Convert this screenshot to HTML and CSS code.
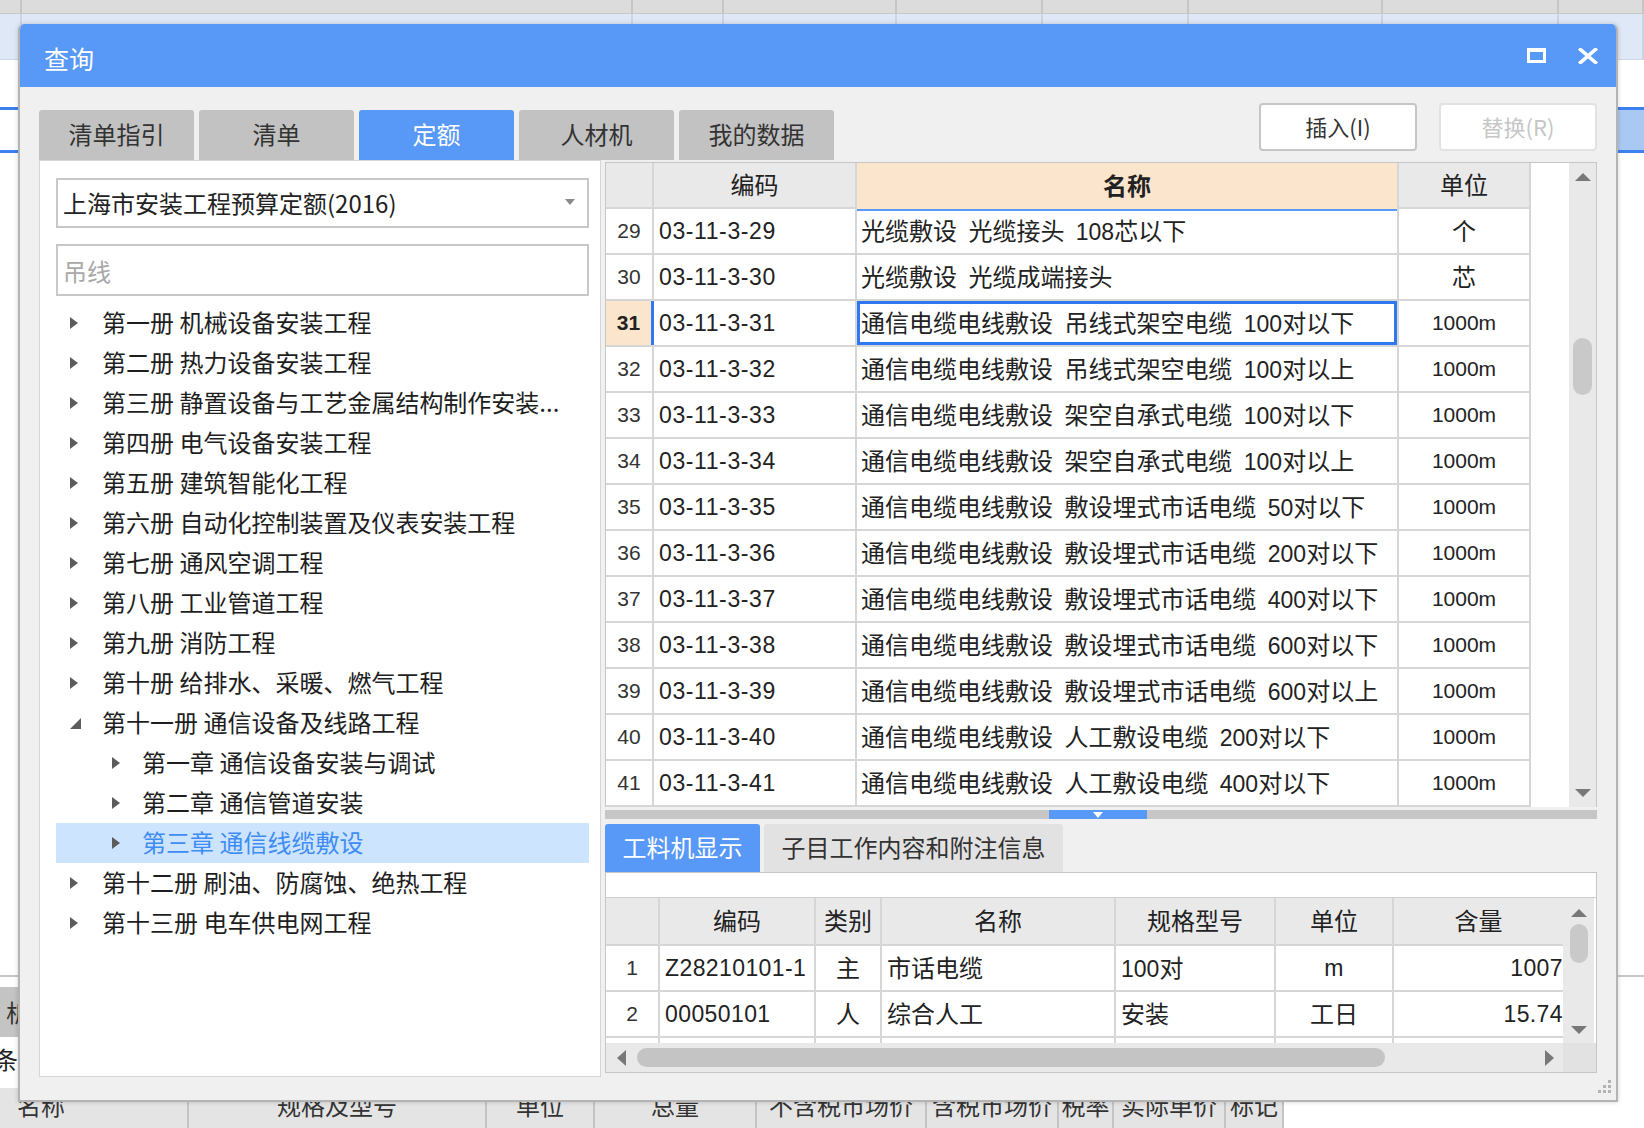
FILE: index.html
```html
<!DOCTYPE html>
<html lang="zh-CN">
<head>
<meta charset="utf-8">
<title>查询</title>
<link rel="stylesheet" href="styles.css">
</head>
<body>
<div class="app">
  <div class="app-head app-cols"><i></i><i></i><i></i><i></i><i></i><i></i><i></i><i></i><i></i></div>
  <div class="app-light app-cols"><i></i><i></i><i></i><i></i><i></i><i></i><i></i><i></i><i></i></div>
  <div class="app-blank"></div>
  <div class="app-sel"><div class="sel-l"></div><div class="sel-r"></div></div>
  <div class="app-spacer"></div>
  <div class="app-side">
    <div class="side-block">析</div>
    <div class="side-text">条件</div>
  </div>
  <div class="app-foot">
    <div class="fc fl">名称</div>
    <div class="fc">规格及型号</div>
    <div class="fc">单位</div>
    <div class="fc">总量</div>
    <div class="fc">不含税市场价</div>
    <div class="fc">含税市场价</div>
    <div class="fc">税率</div>
    <div class="fc">实际单价</div>
    <div class="fc">标记</div>
    <div class="fc blank"></div>
  </div>
</div>

<div class="dialog">
  <div class="titlebar">
    <span class="title">查询</span>
    <span class="ico-max"></span>
    <svg class="ico-close" width="20" height="16" viewBox="0 0 20 16"><path d="M2.5 1.5 L17.5 14.5 M17.5 1.5 L2.5 14.5" stroke="#fff" stroke-width="3.6" stroke-linecap="square"/></svg>
  </div>
  <div class="dbody">
    <div class="toolbar">
      <div class="tabs">
        <div class="tab">清单指引</div>
        <div class="tab">清单</div>
        <div class="tab on">定额</div>
        <div class="tab">人材机</div>
        <div class="tab">我的数据</div>
      </div>
      <div class="btns">
        <button class="btn">插入(I)</button>
        <button class="btn dis">替换(R)</button>
      </div>
    </div>
    <div class="main">
      <div class="left">
        <div class="select">
          <span>上海市安装工程预算定额(2016)</span>
          <svg width="10" height="6" viewBox="0 0 10 6"><path d="M0 0 H10 L5 6 Z" fill="#8a8a8a"/></svg>
        </div>
        <div class="search">吊线</div>
        <div class="tree">
          <div class="node"><span class="arr"><svg width="8" height="12" viewBox="0 0 8 12"><path d="M0 0 L8 6 L0 12 Z"/></svg></span><span>第一册 机械设备安装工程</span></div>
          <div class="node"><span class="arr"><svg width="8" height="12" viewBox="0 0 8 12"><path d="M0 0 L8 6 L0 12 Z"/></svg></span><span>第二册 热力设备安装工程</span></div>
          <div class="node"><span class="arr"><svg width="8" height="12" viewBox="0 0 8 12"><path d="M0 0 L8 6 L0 12 Z"/></svg></span><span>第三册 静置设备与工艺金属结构制作安装...</span></div>
          <div class="node"><span class="arr"><svg width="8" height="12" viewBox="0 0 8 12"><path d="M0 0 L8 6 L0 12 Z"/></svg></span><span>第四册 电气设备安装工程</span></div>
          <div class="node"><span class="arr"><svg width="8" height="12" viewBox="0 0 8 12"><path d="M0 0 L8 6 L0 12 Z"/></svg></span><span>第五册 建筑智能化工程</span></div>
          <div class="node"><span class="arr"><svg width="8" height="12" viewBox="0 0 8 12"><path d="M0 0 L8 6 L0 12 Z"/></svg></span><span>第六册 自动化控制装置及仪表安装工程</span></div>
          <div class="node"><span class="arr"><svg width="8" height="12" viewBox="0 0 8 12"><path d="M0 0 L8 6 L0 12 Z"/></svg></span><span>第七册 通风空调工程</span></div>
          <div class="node"><span class="arr"><svg width="8" height="12" viewBox="0 0 8 12"><path d="M0 0 L8 6 L0 12 Z"/></svg></span><span>第八册 工业管道工程</span></div>
          <div class="node"><span class="arr"><svg width="8" height="12" viewBox="0 0 8 12"><path d="M0 0 L8 6 L0 12 Z"/></svg></span><span>第九册 消防工程</span></div>
          <div class="node"><span class="arr"><svg width="8" height="12" viewBox="0 0 8 12"><path d="M0 0 L8 6 L0 12 Z"/></svg></span><span>第十册 给排水、采暖、燃气工程</span></div>
          <div class="node"><span class="arr"><svg width="11" height="11" viewBox="0 0 11 11"><path d="M11 0 V11 H0 Z"/></svg></span><span>第十一册 通信设备及线路工程</span></div>
          <div class="node l2"><span class="arr"><svg width="8" height="12" viewBox="0 0 8 12"><path d="M0 0 L8 6 L0 12 Z"/></svg></span><span>第一章 通信设备安装与调试</span></div>
          <div class="node l2"><span class="arr"><svg width="8" height="12" viewBox="0 0 8 12"><path d="M0 0 L8 6 L0 12 Z"/></svg></span><span>第二章 通信管道安装</span></div>
          <div class="node l2 sel"><span class="arr"><svg width="8" height="12" viewBox="0 0 8 12"><path d="M0 0 L8 6 L0 12 Z"/></svg></span><span>第三章 通信线缆敷设</span></div>
          <div class="node"><span class="arr"><svg width="8" height="12" viewBox="0 0 8 12"><path d="M0 0 L8 6 L0 12 Z"/></svg></span><span>第十二册 刷油、防腐蚀、绝热工程</span></div>
          <div class="node"><span class="arr"><svg width="8" height="12" viewBox="0 0 8 12"><path d="M0 0 L8 6 L0 12 Z"/></svg></span><span>第十三册 电车供电网工程</span></div>
        </div>
      </div>

      <div class="right">
        <div class="grid-wrap">
          <div class="grid">
            <div class="row hrow">
              <div class="cell cn"></div>
              <div class="cell ch">编码</div>
              <div class="cell ch cmw hsel">名称</div>
              <div class="cell ch cuw">单位</div>
            </div>
            <div class="row"><div class="cell cn">29</div><div class="cell cc">03-11-3-29</div><div class="cell cm"><span>光缆敷设 光缆接头 <span class="d">108</span>芯以下</span></div><div class="cell cu">个</div></div>
            <div class="row"><div class="cell cn">30</div><div class="cell cc">03-11-3-30</div><div class="cell cm"><span>光缆敷设 光缆成端接头</span></div><div class="cell cu">芯</div></div>
            <div class="row cur"><div class="cell cn">31</div><div class="cell cc">03-11-3-31</div><div class="cell cm"><span>通信电缆电线敷设 吊线式架空电缆 <span class="d">100</span>对以下</span></div><div class="cell cu cd">1000m</div></div>
            <div class="row"><div class="cell cn">32</div><div class="cell cc">03-11-3-32</div><div class="cell cm"><span>通信电缆电线敷设 吊线式架空电缆 <span class="d">100</span>对以上</span></div><div class="cell cu cd">1000m</div></div>
            <div class="row"><div class="cell cn">33</div><div class="cell cc">03-11-3-33</div><div class="cell cm"><span>通信电缆电线敷设 架空自承式电缆 <span class="d">100</span>对以下</span></div><div class="cell cu cd">1000m</div></div>
            <div class="row"><div class="cell cn">34</div><div class="cell cc">03-11-3-34</div><div class="cell cm"><span>通信电缆电线敷设 架空自承式电缆 <span class="d">100</span>对以上</span></div><div class="cell cu cd">1000m</div></div>
            <div class="row"><div class="cell cn">35</div><div class="cell cc">03-11-3-35</div><div class="cell cm"><span>通信电缆电线敷设 敷设埋式市话电缆 <span class="d">50</span>对以下</span></div><div class="cell cu cd">1000m</div></div>
            <div class="row"><div class="cell cn">36</div><div class="cell cc">03-11-3-36</div><div class="cell cm"><span>通信电缆电线敷设 敷设埋式市话电缆 <span class="d">200</span>对以下</span></div><div class="cell cu cd">1000m</div></div>
            <div class="row"><div class="cell cn">37</div><div class="cell cc">03-11-3-37</div><div class="cell cm"><span>通信电缆电线敷设 敷设埋式市话电缆 <span class="d">400</span>对以下</span></div><div class="cell cu cd">1000m</div></div>
            <div class="row"><div class="cell cn">38</div><div class="cell cc">03-11-3-38</div><div class="cell cm"><span>通信电缆电线敷设 敷设埋式市话电缆 <span class="d">600</span>对以下</span></div><div class="cell cu cd">1000m</div></div>
            <div class="row"><div class="cell cn">39</div><div class="cell cc">03-11-3-39</div><div class="cell cm"><span>通信电缆电线敷设 敷设埋式市话电缆 <span class="d">600</span>对以上</span></div><div class="cell cu cd">1000m</div></div>
            <div class="row"><div class="cell cn">40</div><div class="cell cc">03-11-3-40</div><div class="cell cm"><span>通信电缆电线敷设 人工敷设电缆 <span class="d">200</span>对以下</span></div><div class="cell cu cd">1000m</div></div>
            <div class="row"><div class="cell cn">41</div><div class="cell cc">03-11-3-41</div><div class="cell cm"><span>通信电缆电线敷设 人工敷设电缆 <span class="d">400</span>对以下</span></div><div class="cell cu cd">1000m</div></div>
          </div>
          <div class="filler"></div>
          <div class="vs">
            <svg class="sa" width="16" height="8" viewBox="0 0 16 8"><path d="M0 8 L8 0 L16 8 Z"/></svg>
            <div class="thumb"></div>
            <div class="grow"></div>
            <svg class="sa" width="16" height="8" viewBox="0 0 16 8"><path d="M0 0 H16 L8 8 Z"/></svg>
          </div>
        </div>

        <div class="splitter">
          <div class="handle"><svg width="10" height="6" viewBox="0 0 10 6"><path d="M0 0 H10 L5 6 Z" fill="#fff"/></svg></div>
        </div>

        <div class="btabs">
          <div class="btab on">工料机显示</div>
          <div class="btab">子目工作内容和附注信息</div>
        </div>

        <div class="lower">
          <div class="band"></div>
          <div class="larea">
            <div class="ltable">
              <div class="lrow lhead">
                <div class="lc l1"></div>
                <div class="lc l2c">编码</div>
                <div class="lc l3">类别</div>
                <div class="lc l4">名称</div>
                <div class="lc l5">规格型号</div>
                <div class="lc l6">单位</div>
                <div class="lc l7">含量</div>
              </div>
              <div class="lrow">
                <div class="lc l1 num">1</div>
                <div class="lc l2c lt ld">Z28210101-1</div>
                <div class="lc l3">主</div>
                <div class="lc l4 lt">市话电缆</div>
                <div class="lc l5 lt"><span><span class="d">100</span>对</span></div>
                <div class="lc l6 ld">m</div>
                <div class="lc l7 rt ld">1007</div>
              </div>
              <div class="lrow">
                <div class="lc l1 num">2</div>
                <div class="lc l2c lt ld">00050101</div>
                <div class="lc l3">人</div>
                <div class="lc l4 lt">综合人工</div>
                <div class="lc l5 lt">安装</div>
                <div class="lc l6">工日</div>
                <div class="lc l7 rt ld">15.74</div>
              </div>
              <div class="lrow part">
                <div class="lc l1"></div>
                <div class="lc l2c"></div>
                <div class="lc l3"></div>
                <div class="lc l4"></div>
                <div class="lc l5"></div>
                <div class="lc l6"></div>
                <div class="lc l7"></div>
              </div>
            </div>
            <div class="lvs">
              <svg class="sa" width="16" height="8" viewBox="0 0 16 8"><path d="M0 8 L8 0 L16 8 Z"/></svg>
              <div class="lthumb"></div>
              <div class="grow"></div>
              <svg class="sa" width="16" height="8" viewBox="0 0 16 8"><path d="M0 0 H16 L8 8 Z"/></svg>
            </div>
          </div>
          <div class="hs">
            <div class="htrack">
              <svg class="sa" width="9" height="16" viewBox="0 0 9 16"><path d="M9 0 V16 L0 8 Z"/></svg>
              <div class="hthumb"></div>
              <div class="grow"></div>
              <svg class="sa" width="9" height="16" viewBox="0 0 9 16"><path d="M0 0 L9 8 L0 16 Z"/></svg>
            </div>
            <div class="corner"></div>
          </div>
        </div>
      </div>
    </div>
  </div>
  <div class="dfoot">
    <svg width="16" height="16" viewBox="0 0 16 16" fill="#b3b3b3"><rect x="12" y="1" width="3" height="3"/><rect x="7" y="6" width="3" height="3"/><rect x="12" y="6" width="3" height="3"/><rect x="2" y="11" width="3" height="3"/><rect x="7" y="11" width="3" height="3"/><rect x="12" y="11" width="3" height="3"/></svg>
  </div>
</div>
</body>
</html>
```

FILE: styles.css
```css
* { box-sizing: border-box; margin: 0; padding: 0; }

body {
  width: 1644px;
  height: 1128px;
  overflow: hidden;
  position: relative;
  background: #fff;
  font-family: "Noto Sans CJK SC", "Noto Sans", sans-serif;
  color: #222;
}

/* ---------- background application ---------- */
.app { display: flex; flex-direction: column; height: 1128px; }
.app-cols {
  display: grid;
  grid-template-columns: 22px 611px 91px 173px 146px 146px 194px 176px 1fr;
}
.app-cols i { border-right: 2px solid #c6c6c6; }
.app-head { height: 14px; background: #dcdcdc; border-bottom: 1px solid #c8c8c8; }
.app-light { height: 46px; background: #dfe8f7; border-bottom: 1px solid #cdd6e4; }
.app-light i { border-right-color: #cdd4df; }
.app-blank { height: 47px; }
.app-sel {
  height: 46px;
  display: flex;
  border-top: 3px solid #3b7ff0;
  border-bottom: 3px solid #3b7ff0;
}
.sel-l { width: 1000px; background: #fff; }
.sel-r { flex: 1; background: #a9c9f3; }
.app-spacer { flex: 1; }
.app-side { height: 113px; border-top: 2px solid #c8c8c8; padding-top: 10px; }
.side-block {
  height: 50px; width: 120px; background: #c4c4c4;
  font-size: 24px; line-height: 50px; padding-left: 6px; color: #333;
}
.side-text { font-size: 24px; line-height: 44px; text-indent: -6px; color: #222; }
.app-foot {
  height: 40px;
  display: grid;
  grid-template-columns: 189px 298px 108px 162px 170px 132px 55px 112px 58px 1fr;
}
.fc {
  background: #e4e4e4;
  border-right: 2px solid #c4c4c4;
  font-size: 24px;
  line-height: 34px;
  text-align: center;
  color: #333;
}
.fc.fl { text-align: left; padding-left: 17px; }
.fc.blank { background: #fff; border-right: 0; }

/* ---------- dialog ---------- */
.dialog {
  position: absolute;
  left: 18px;
  top: 24px;
  width: 1600px;
  height: 1078px;
  background: #f0f0f0;
  border: 2px solid #b4b4b4;
  border-top: 0;
  border-radius: 6px 6px 0 0;
  overflow: hidden;
  display: flex;
  flex-direction: column;
  box-shadow: 0 0 5px rgba(0, 0, 0, 0.18);
}
.titlebar {
  height: 63px;
  flex: none;
  background: #5898f7;
  display: flex;
  align-items: center;
  padding: 0 18px 0 24px;
  color: #fff;
}
.title { font-size: 25px; flex: 1; padding-top: 5px; }
.ico-max {
  width: 19px; height: 15px;
  border: 3px solid #fff; border-top-width: 4px;
  margin-right: 32px;
}
.ico-close { display: block; }

.dbody { flex: none; display: flex; flex-direction: column; padding: 0 19px; }
.toolbar {
  height: 73px;
  display: flex;
  align-items: flex-end;
  justify-content: space-between;
}
.tabs { display: flex; gap: 5px; }
.tab {
  width: 155px; height: 50px;
  background: #c2c2c2;
  border-radius: 3px 3px 0 0;
  font-size: 24px;
  color: #333;
  display: flex; align-items: center; justify-content: center;
  padding-bottom: 4px;
}
.tab.on { background: #5898f7; color: #fff; }
.btns { display: flex; gap: 22px; margin-bottom: 9px; }
.btn {
  width: 158px; height: 48px;
  background: #fff;
  border: 2px solid #c6c6c6;
  border-radius: 4px;
  font-family: inherit;
  font-size: 22px;
  color: #333;
  padding-bottom: 3px;
}
.btn.dis { color: #c6c6c6; border-color: #e2e2e2; }

.main { height: 917px; display: flex; gap: 4px; }

/* left tree panel */
.left {
  width: 562px;
  flex: none;
  background: #fff;
  border: 1px solid #d6d6d6;
  padding: 17px 11px 0 16px;
}
.select {
  height: 50px;
  border: 2px solid #c8c8c8;
  display: flex; align-items: center; justify-content: space-between;
  padding: 0 12px 2px 5px;
  font-size: 24px;
  color: #222;
}
.search {
  margin-top: 16px;
  height: 52px;
  border: 2px solid #c8c8c8;
  display: flex; align-items: center;
  padding-left: 5px;
  font-size: 24px;
  color: #a8a8a8;
}
.tree { margin-top: 7px; }
.node {
  height: 40px;
  display: flex; align-items: center;
  padding-left: 14px;
  font-size: 24px;
  color: #1e1e1e;
  white-space: nowrap;
}
.node > span:last-child { padding-bottom: 3px; }
.arr { width: 32px; flex: none; display: flex; align-items: center; }
.arr svg { fill: #5c5c5c; display: block; }
.node.l2 { padding-left: 56px; }
.node.l2 .arr { width: 30px; }
.node.sel { background: #cde4ff; color: #3f8cf5; }

/* right panel */
.right { flex: 1; display: flex; flex-direction: column; padding-top: 2px; min-width: 0; }
.grid-wrap {
  height: 645px;
  border: 1px solid #c6c6c6;
  border-bottom: 0;
  display: flex;
  background: #fff;
}
.grid { width: 925px; flex: none; }
.row { display: flex; height: 46px; border-bottom: 2px solid #d6d6d6; }
.cell {
  border-right: 2px solid #d6d6d6;
  display: flex; align-items: center;
  font-size: 24px;
  color: #222;
  white-space: nowrap;
  overflow: hidden;
}
.cn { width: 48px; justify-content: center; font-family: "Liberation Sans", sans-serif; font-size: 21px; color: #333; }
.cc {
  width: 203px; padding-left: 5px;
  font-family: "Liberation Sans", sans-serif; font-size: 23px; letter-spacing: 0.6px;
}
.cm { width: 542px; padding-left: 4px; padding-bottom: 3px; word-spacing: 6px; }
.cu { width: 132px; justify-content: center; padding-bottom: 3px; }
.cu.cd { font-family: "Liberation Sans", sans-serif; font-size: 21px; padding-bottom: 0; }
.ch { width: 203px; justify-content: center; font-size: 24px; padding-bottom: 3px; }
.ch.cmw { width: 542px; }
.ch.cuw { width: 132px; }
.hrow { background: #e9e9e9; }
.hsel { background: #fbe5cd; font-weight: bold; border-bottom: 2px solid #5a9af7; height: 48px; }
.cur .cn { background: #fbe5cd; font-weight: bold; border-right: 3px solid #2f78f2; color: #222; }
.cur .cm { box-shadow: inset 0 0 0 3px #2f78f2; }

.filler { flex: 1; background: #fff; }
.vs {
  width: 27px; flex: none;
  background: #e9e9e9;
  display: flex; flex-direction: column; align-items: center;
  padding: 10px 0 10px;
}
.sa { fill: #787878; display: block; flex: none; }
.thumb {
  width: 19px; height: 57px;
  border-radius: 10px;
  background: #c9c9c9;
  margin-top: 157px;
}
.grow { flex: 1; }

.splitter {
  margin-top: 3px;
  height: 9px;
  background: #c6c6c6;
  display: flex;
  padding-left: 444px;
}
.handle {
  width: 98px; height: 9px;
  background: #5898f7;
  display: flex; align-items: center; justify-content: center;
}
.handle svg { display: block; }

.btabs { margin-top: 5px; height: 48px; display: flex; gap: 4px; }
.btab {
  width: 299px; height: 48px;
  background: #e2e2e2;
  border-radius: 3px 3px 0 0;
  font-size: 24px;
  color: #333;
  display: flex; align-items: center; justify-content: center;
  padding-bottom: 3px;
}
.btab.on { width: 155px; background: #5898f7; color: #fff; }

.lower {
  height: 201px;
  border: 1px solid #c6c6c6;
  background: #fff;
  display: flex; flex-direction: column;
}
.band { height: 25px; flex: none; border-bottom: 1px solid #cfcfcf; }
.larea { height: 145px; flex: none; display: flex; }
.ltable { width: 957px; flex: none; overflow: hidden; }
.lrow { height: 46px; display: flex; border-bottom: 2px solid #d6d6d6; }
.lrow.lhead { height: 48px; background: #e9e9e9; }
.lrow.part { height: 5px; border-bottom: 0; }
.lc {
  border-right: 2px solid #d6d6d6;
  display: flex; align-items: center; justify-content: center;
  font-size: 24px;
  color: #222;
  white-space: nowrap;
  overflow: hidden;
  padding-bottom: 3px;
}
.l1 { width: 54px; }
.l2c { width: 156px; }
.l3 { width: 66px; }
.l4 { width: 234px; }
.l5 { width: 160px; }
.l6 { width: 118px; }
.l7 { width: 169px; border-right: 0; }
.lc.lt { justify-content: flex-start; padding-left: 5px; }
.lc.rt { justify-content: flex-end; padding-right: 0; }
.lc.num { font-family: "Liberation Sans", sans-serif; font-size: 21px; color: #333; padding-bottom: 0; }
.lc.ld { font-family: "Liberation Sans", sans-serif; font-size: 23px; letter-spacing: 0.4px; padding-bottom: 0; }
.lrow.part .lc { padding-bottom: 0; }
.lvs {
  width: 31px; flex: none;
  background: #e9e9e9;
  display: flex; flex-direction: column; align-items: center;
  padding: 11px 0 9px;
}
.lthumb {
  width: 18px; height: 39px;
  border-radius: 9px;
  background: #c9c9c9;
  margin-top: 7px;
}
.hs { height: 29px; flex: none; display: flex; background: #e9e9e9; }
.htrack {
  width: 957px;
  display: flex; align-items: center;
  padding: 0 9px 0 11px;
}
.hthumb {
  width: 748px; height: 19px;
  border-radius: 10px;
  background: #c4c4c4;
  margin-left: 11px;
}
.corner { flex: 1; background: #e2e2e2; }

.dfoot {
  flex: 1;
  display: flex;
  justify-content: flex-end;
  align-items: flex-start;
  padding: 2px 4px 0 0;
}
.dfoot svg { display: block; }

/* digits inside CJK text */
.d { font-family: "Liberation Sans", sans-serif; font-size: 23px; word-spacing: 0; }
```
